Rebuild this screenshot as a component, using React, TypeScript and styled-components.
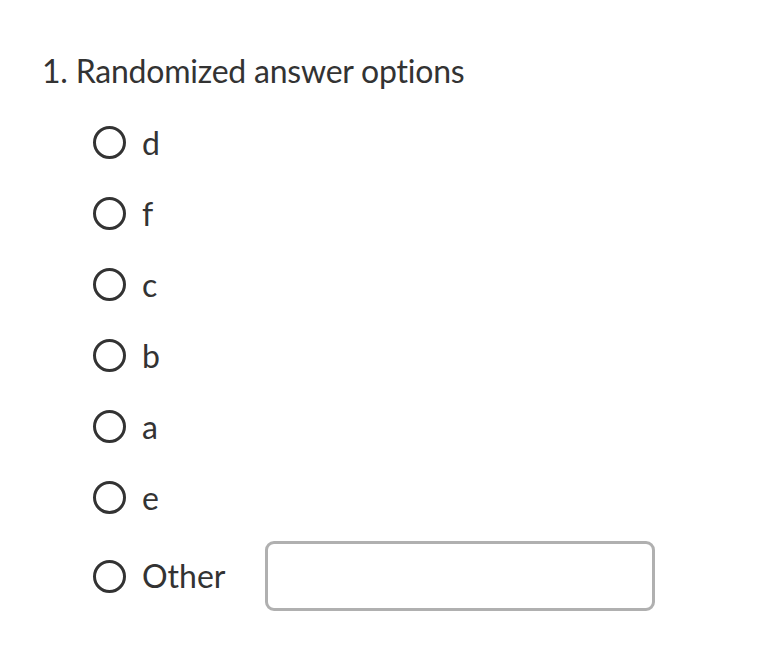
import React from "react";
import styled, { createGlobalStyle } from "styled-components";

const Global = createGlobalStyle`
  html, body { margin: 0; padding: 0; background: #ffffff; }
  body { font-family: Lato, "Open Sans", sans-serif; color: #333333; }
`;

const Page = styled.main`
  padding: 52px 0 0 42px;
  width: 782px;
  box-sizing: border-box;
`;

const Title = styled.h1`
  margin: 0;
  font-size: 32px;
  font-weight: 400;
  line-height: 38px;
  color: #333333;
  letter-spacing: -0.22px;
`;

const OptionList = styled.ul`
  list-style: none;
  margin: 17px 0 0 0;
  padding: 0 0 0 51px;
  display: flex;
  flex-direction: column;
`;

const Option = styled.li<{ $tall?: boolean }>`
  display: flex;
  align-items: center;
  gap: 16px;
  min-height: 71px;
  padding: ${(p) => (p.$tall ? "8px 0" : "0")};
  box-sizing: border-box;
`;

const Radio = styled.span`
  width: 33px;
  height: 33px;
  box-sizing: border-box;
  border: 3.5px solid #333333;
  border-radius: 50%;
  flex: none;
`;

const Label = styled.span`
  font-size: 32px;
  line-height: 38px;
  color: #333333;
`;

const OtherInput = styled.input`
  margin-left: 24px;
  width: 390px;
  height: 70px;
  box-sizing: border-box;
  border: 3.5px solid #b0b0b0;
  border-radius: 9px;
  background: #ffffff;
  outline: none;
  font-family: inherit;
  font-size: 28px;
`;

const options = ["d", "f", "c", "b", "a", "e"];

export default function App() {
  return (
    <>
      <Global />
      <Page>
        <Title>1. Randomized answer options</Title>
        <OptionList>
          {options.map((o) => (
            <Option key={o}>
              <Radio />
              <Label>{o}</Label>
            </Option>
          ))}
          <Option $tall>
            <Radio />
            <Label>Other</Label>
            <OtherInput type="text" aria-label="Other" />
          </Option>
        </OptionList>
      </Page>
    </>
  );
}
